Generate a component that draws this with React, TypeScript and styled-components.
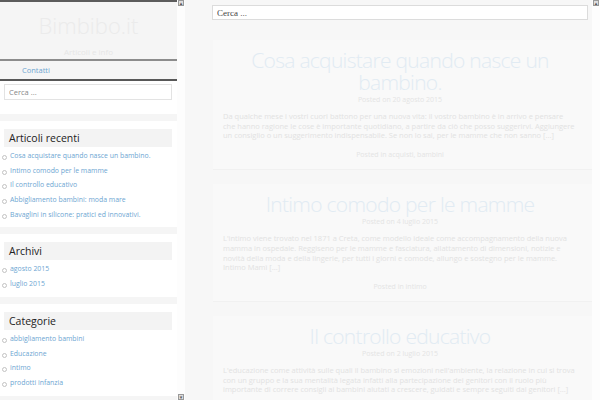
import React from "react";
import styled, { createGlobalStyle } from "styled-components";

type PostT = {
  title: string;
  date: string;
  excerpt: string;
  categories: string;
};

const posts: PostT[] = [
  {
    title: "Cosa acquistare quando nasce un bambino.",
    date: "20 agosto 2015",
    excerpt:
      "Da qualche mese i vostri cuori battono per una nuova vita: il vostro bambino è in arrivo e pensare che hanno ragione le cose è importante quotidiano, a partire da ciò che posso suggerirvi. Aggiungere un consiglio o un suggerimento indispensabile. Se non lo sai, per le mamme che non sanno [...]",
    categories: "acquisti, bambini",
  },
  {
    title: "Intimo comodo per le mamme",
    date: "4 luglio 2015",
    excerpt:
      "L'intimo viene trovato nel 1871 a Creta, come modello ideale come accompagnamento della nuova mamma in ospedale. Reggiseno per le mamme e fasciatura, allattamento di dimensioni, notizie e novità della moda e della lingerie, per tutti i giorni e comode, allungo e sostegno per le mamme. Intimo Mamì [...]",
    categories: "intimo",
  },
  {
    title: "Il controllo educativo",
    date: "2 luglio 2015",
    excerpt:
      "L'educazione come attività sulle quali il bambino si emozioni nell'ambiente, la relazione in cui si trova con un gruppo e la sua mentalità legata infatti alla partecipazione dei genitori con il ruolo più importante di correre consigli ai bambini aiutati a crescere, guidati e sempre seguiti dai genitori [...]",
    categories: "educazione",
  },
];

const recent = [
  "Cosa acquistare quando nasce un bambino.",
  "Intimo comodo per le mamme",
  "Il controllo educativo",
  "Abbigliamento bambini: moda mare",
  "Bavaglini in silicone: pratici ed innovativi.",
];
const archives = ["agosto 2015", "luglio 2015"];
const categories = ["abbigliamento bambini", "Educazione", "intimo", "prodotti infanzia"];

export default function App() {
  return (
    <>
      <GlobalStyle />
      <Page>
        <Sidebar>
          <SideContent>
            <Masthead>
              <SiteTitle>Bimbibo.it</SiteTitle>
              <Tagline>Articoli e info</Tagline>
            </Masthead>
            <NavBar>
              <NavLink>Contatti</NavLink>
            </NavBar>
            <SideSearch placeholder="Cerca ..." />
            <Widget title="Articoli recenti" items={recent} />
            <Widget title="Archivi" items={archives} />
            <Widget title="Categorie" items={categories} />
            <Band />
          </SideContent>
          <Scrollbar>
            <ArrowBox>▴</ArrowBox>
            <ArrowBox>▾</ArrowBox>
          </Scrollbar>
        </Sidebar>
        <Main>
          <MainContent>
            <MainSearch placeholder="Cerca ..." />
            {posts.map((p) => (
              <Post key={p.title}>
                <PostTitle>{p.title}</PostTitle>
                <Meta $gap={3}>Posted on {p.date}</Meta>
                <Excerpt>{p.excerpt}</Excerpt>
                <Meta $gap={10}>Posted in {p.categories}</Meta>
              </Post>
            ))}
          </MainContent>
          <Scrollbar>
            <ArrowBox>▴</ArrowBox>
          </Scrollbar>
        </Main>
      </Page>
    </>
  );
}

type WidgetPropsT = { title: string; items: string[] };

const Widget: React.FC<WidgetPropsT> = ({ title, items }) => (
  <WidgetBox>
    <Band />
    <WidgetTitle>{title}</WidgetTitle>
    <List>
      {items.map((i) => (
        <Item key={i}>{i}</Item>
      ))}
    </List>
  </WidgetBox>
);

const GlobalStyle = createGlobalStyle`
  html, body {
    margin: 0;
    padding: 0;
    width: 600px;
    height: 400px;
    overflow: hidden;
    background: #f7f7f7;
  }
  * { box-sizing: border-box; }
`;

const Page = styled.div`
  display: flex;
  width: 600px;
  height: 400px;
  overflow: hidden;
  font-family: "Open Sans", "Noto Sans", sans-serif;
`;

const Sidebar = styled.div`
  display: flex;
  width: 185px;
  height: 400px;
  background: #fff;
  flex-shrink: 0;
`;

const SideContent = styled.div`
  width: 177px;
  height: 400px;
  overflow: hidden;
  display: flex;
  flex-direction: column;
`;

const Masthead = styled.header`
  height: 59px;
  flex-shrink: 0;
  border-top: 2px solid #5c5c5c;
  background: #f5f5f5;
  display: flex;
  flex-direction: column;
  align-items: center;
`;

const SiteTitle = styled.h1`
  margin: 8px 0 0;
  font-size: 22px;
  font-weight: 300;
  line-height: 30px;
  color: #ebebeb;
`;

const Tagline = styled.div`
  margin-top: 7px;
  font-size: 8px;
  line-height: 10px;
  color: #e6e6e6;
`;

const NavBar = styled.nav`
  height: 22px;
  flex-shrink: 0;
  border-top: 2px solid #8c8c8c;
  border-bottom: 2px solid #575757;
  background: #f5f5f5;
  display: flex;
  align-items: center;
  padding-left: 22px;
`;

const NavLink = styled.a`
  font-size: 7.5px;
  color: #6ea6d2;
`;

const SideSearch = styled.input`
  margin: 3px 5px 14px 4px;
  height: 16px;
  flex-shrink: 0;
  border: 1px solid #e3e3e3;
  background: #fff;
  padding: 0 4px;
  font-family: "Open Sans", sans-serif;
  font-size: 7.5px;
  outline: none;
  &::placeholder { color: #888; }
`;

const WidgetBox = styled.section`
  display: flex;
  flex-direction: column;
  flex-shrink: 0;
  padding-bottom: 5px;
`;

const Band = styled.div`
  height: 7px;
  background: #f5f5f5;
  flex-shrink: 0;
`;

const WidgetTitle = styled.h2`
  margin: 8px 5px 2px 4px;
  height: 18px;
  padding-left: 5px;
  background: #f3f3f3;
  font-size: 10.5px;
  font-weight: 400;
  line-height: 18px;
  color: #222;
`;

const List = styled.ul`
  margin: 0;
  padding: 0 0 0 10px;
  list-style: none;
`;

const Item = styled.li`
  position: relative;
  height: 14.7px;
  line-height: 14.7px;
  font-size: 6.9px;
  color: #6ea6d2;
  white-space: nowrap;
  &::before {
    content: "";
    position: absolute;
    left: -8px;
    top: 6px;
    width: 3px;
    height: 3px;
    border: 1px solid #c2c2c2;
    border-radius: 50%;
  }
`;

const Scrollbar = styled.div`
  width: 8px;
  height: 400px;
  background: #fdfdfd;
  display: flex;
  flex-direction: column;
  justify-content: space-between;
  align-items: center;
  flex-shrink: 0;
`;

const ArrowBox = styled.div`
  width: 6px;
  height: 6px;
  border: 1px solid #999;
  background: #ddd;
  color: #555;
  font-size: 5px;
  line-height: 4px;
  text-align: center;
  overflow: hidden;
  font-family: "DejaVu Sans", sans-serif;
`;

const Main = styled.main`
  flex: 1;
  display: flex;
  height: 400px;
  background: #f7f7f7;
`;

const MainContent = styled.div`
  flex: 1;
  overflow: hidden;
  padding: 5px 0 0 27px;
  display: flex;
  flex-direction: column;
`;

const MainSearch = styled.input`
  margin: 0 4px 20px 0;
  height: 15px;
  flex-shrink: 0;
  border: 1px solid #dcdcdc;
  background: #fff;
  padding: 0 4px;
  font-family: "Liberation Serif", serif;
  font-size: 9px;
  outline: none;
  &::placeholder { color: #444; }
`;

const Post = styled.article`
  margin: 0 0 14px 1px;
  padding: 9px 15px 10px 10px;
  background: #f9f9f9;
  border-bottom: 1px solid #f1f1f1;
  text-align: center;
  flex-shrink: 0;
`;

const PostTitle = styled.h2`
  margin: 0;
  font-size: 21px;
  font-weight: 300;
  letter-spacing: -0.7px;
  line-height: 22px;
  color: #e1ebf3;
`;

const Meta = styled.div<{ $gap?: number }>`
  margin-top: ${(p) => p.$gap ?? 0}px;
  font-size: 7px;
  line-height: 8px;
  color: #e4e4e4;
`;

const Excerpt = styled.p`
  margin: 8px 0 0;
  text-align: left;
  font-size: 7.5px;
  line-height: 9.7px;
  color: #e2e2e2;
`;
